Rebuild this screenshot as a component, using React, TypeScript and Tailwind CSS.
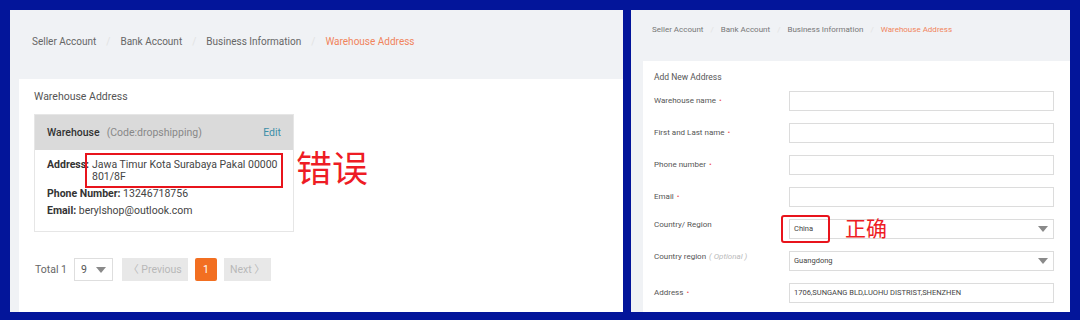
import React from 'react';

const leftCrumbs = ['Seller Account', 'Bank Account', 'Business Information'];

function Caret() {
  return (
    <svg width="10" height="6" viewBox="0 0 10 6" className="shrink-0">
      <path d="M0 0 L10 0 L5 6 Z" fill="#8a8a8a" />
    </svg>
  );
}

function Req() {
  return <span className="text-[#f05a5a] ml-[3px]">•</span>;
}

function LeftPanel() {
  return (
    <div className="w-[613px] h-[302px] bg-[#f0f2f5] flex flex-col">
      {/* breadcrumb */}
      <div className="h-[69px] flex items-start pt-[24px] pl-[22px] text-[10px] text-[#666]">
        {leftCrumbs.map((c) => (
          <React.Fragment key={c}>
            <span>{c}</span>
            <span className="mx-[10px] text-[#e2e2e2]">/</span>
          </React.Fragment>
        ))}
        <span className="text-[#f0845c]">Warehouse Address</span>
      </div>

      <div className="flex-1 ml-[9px] bg-white pl-[15px] pt-[11px]">
        <div className="text-[10.5px] leading-[14px] text-[#555]">Warehouse Address</div>

        <div className="relative mt-[10px] w-[260px]">
          <div className="border border-[#e6e6e6]">
            <div className="h-[35px] bg-[#dadada] flex items-center px-[12px] text-[10.5px]">
              <span className="text-[#333] font-medium">Warehouse</span>
              <span className="ml-[7px] text-[#888]">(Code:dropshipping)</span>
              <span className="ml-auto text-[#3d8fa8]">Edit</span>
            </div>
            <div className="pl-[12px] pr-[4px] pt-[9px] pb-[14px] text-[10.5px] text-[#444] leading-[12px]">
              <div className="flex relative">
                <span className="font-bold text-[#333] shrink-0">Address:</span>
                <span className="ml-[3px] flex-1">Jawa Timur Kota Surabaya Pakal 00000 801/8F</span>
                <div className="absolute left-[38px] top-[-6px] w-[198px] h-[35px] border-2 border-[#e8141c]" />
              </div>
              <div className="mt-[5px]">
                <span className="font-bold text-[#333]">Phone Number:</span> 13246718756
              </div>
              <div className="mt-[5px]">
                <span className="font-bold text-[#333]">Email:</span> berylshop@outlook.com
              </div>
            </div>
          </div>
          <div className="absolute left-[262px] top-[38px] text-[36px] leading-none text-[#ee1c24] whitespace-nowrap">
            错误
          </div>
        </div>

        {/* pagination */}
        <div className="mt-[26px] flex items-center h-[23px] text-[10.5px]">
          <span className="text-[#666] ml-[1px]">Total 1</span>
          <div className="ml-[7px] w-[39px] h-[23px] border border-[#dedede] flex items-center justify-between px-[6px] text-[#555]">
            <span>9</span>
            <Caret />
          </div>
          <div className="ml-[9px] w-[66px] h-[23px] bg-[#e8e8e8] text-[#b8b8b8] flex items-center justify-center">
            〈 Previous
          </div>
          <div className="ml-[7px] w-[22px] h-[23px] bg-[#f26f21] text-white rounded-[2px] flex items-center justify-center">
            1
          </div>
          <div className="ml-[7px] w-[47px] h-[23px] bg-[#e8e8e8] text-[#b8b8b8] flex items-center justify-center">
            Next 〉
          </div>
        </div>
      </div>
    </div>
  );
}

type Row = { label: string; req?: boolean; optional?: boolean; value?: string; select?: boolean; top?: boolean; mark?: boolean };

const rows: Row[] = [
  { label: 'Warehouse name', req: true },
  { label: 'First and Last name', req: true },
  { label: 'Phone number', req: true },
  { label: 'Email', req: true },
  { label: 'Country/ Region', value: 'China', select: true, top: true, mark: true },
  { label: 'Country region', optional: true, value: 'Guangdong', select: true, top: true },
  { label: 'Address', req: true, value: '1706,SUNGANG BLD,LUOHU DISTRIST,SHENZHEN' },
];

function RightPanel() {
  return (
    <div className="w-[439px] h-[302px] bg-[#f0f2f5] flex flex-col">
      <div className="h-[51px] flex items-start pt-[14px] pl-[21px] text-[8px] text-[#777]">
        {leftCrumbs.map((c) => (
          <React.Fragment key={c}>
            <span>{c}</span>
            <span className="mx-[7px] text-[#e2e2e2]">/</span>
          </React.Fragment>
        ))}
        <span className="text-[#f0845c]">Warehouse Address</span>
      </div>

      <div className="flex-1 ml-[12px] bg-white pl-[11px] pt-[11px]">
        <div className="text-[8.5px] leading-[10px] text-[#555]">Add New Address</div>
        <div className="mt-[9px] grid grid-cols-[135px_265px] gap-y-[12px]">
          {rows.map((r) => (
            <React.Fragment key={r.label}>
              <div className={`h-[20px] flex text-[8px] text-[#555] ${r.top ? 'items-start' : 'items-center'}`}>
                <span>{r.label}</span>
                {r.req && <Req />}
                {r.optional && <span className="ml-[3px] italic text-[#bbb]">( Optional )</span>}
              </div>
              <div className="relative h-[20px] border border-[#dcdcdc] flex items-center px-[4px] text-[7.5px] text-[#444]">
                <span>{r.value}</span>
                {r.select && (
                  <span className="ml-auto mr-[1px]">
                    <Caret />
                  </span>
                )}
                {r.mark && (
                  <>
                    <div className="absolute left-[-9px] top-[-5px] w-[49px] h-[28px] border-2 border-[#e8141c] rounded-[3px]" />
                    <div className="absolute left-[55px] top-[-1px] text-[21px] leading-none text-[#ee1c24] whitespace-nowrap">
                      正确
                    </div>
                  </>
                )}
              </div>
            </React.Fragment>
          ))}
        </div>
      </div>
    </div>
  );
}

export default function App() {
  return (
    <div
      className="w-[1080px] h-[320px] bg-[#03159a] flex pt-[10px] pl-[10px] gap-[8px]"
      style={{ fontFamily: 'Roboto, "Noto Sans CJK SC", sans-serif' }}
    >
      <LeftPanel />
      <RightPanel />
    </div>
  );
}
